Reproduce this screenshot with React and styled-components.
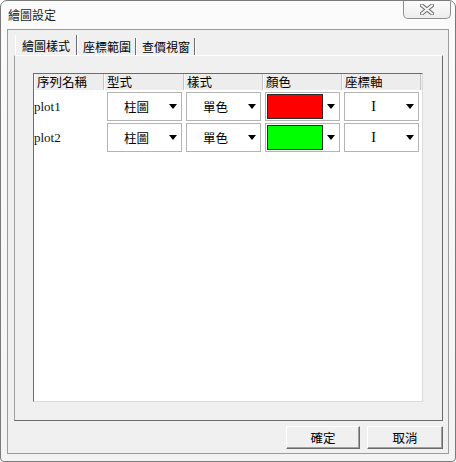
import React from "react";
import styled, { createGlobalStyle } from "styled-components";

const Global = createGlobalStyle`
  html, body { margin: 0; padding: 0; background: #ffffff; }
  * { box-sizing: border-box; }
`;

const CJK = `"Noto Sans CJK TC", "Noto Sans CJK SC", sans-serif`;

const Window = styled.div`
  width: 456px;
  height: 462px;
  border: 1px solid #7a7a7a;
  border-radius: 7px 7px 4px 4px;
  background: linear-gradient(#fbfbfb, #f3f3f3);
  display: flex;
  flex-direction: column;
  font-family: ${CJK};
  font-size: 12px;
  color: #000;
  overflow: hidden;
`;

const TitleBar = styled.div`
  height: 28px;
  display: flex;
  align-items: flex-start;
  justify-content: space-between;
`;

const Title = styled.div`
  padding: 6px 0 0 7px;
  font-size: 12px;
  line-height: 16px;
  color: #1a1a1a;
`;

const CloseButton = styled.div`
  width: 48px;
  height: 19px;
  margin: -1px 4px 0 0;
  border: 1px solid #8f8f8f;
  border-top: none;
  border-radius: 0 0 5px 5px;
  background: linear-gradient(#fdfdfd, #ededed);
  display: flex;
  align-items: center;
  justify-content: center;
`;

const Client = styled.div`
  flex: 1;
  margin: 0 6px 7px 6px;
  border: 1px solid #9b9b9b;
  background: #f0f0f0;
  display: flex;
  flex-direction: column;
  padding: 5px 5px 4px 6px;
`;

const TabStrip = styled.div`
  height: 20px;
  display: flex;
  align-items: flex-end;
  padding-left: 1px;
`;

const Tab = styled.div`
  height: ${(p) => (p.$active ? "20px" : "17px")};
  padding: ${(p) => (p.$active ? "0 6px 0 6px" : "0 4px 0 4px")};
  display: flex;
  align-items: center;
  font-size: 12px;
  line-height: 15px;
  border-left: 1px solid ${(p) => (p.$active ? "#ffffff" : "transparent")};
  border-right: 1px solid #6e6e6e;
  box-shadow: 1px 0 0 #ffffff;
  margin-right: 1px;
  background: #f0f0f0;
`;

const TabPanel = styled.div`
  height: 366px;
  border-top: 1px solid #ffffff;
  border-left: 1px solid #a0a0a0;
  border-right: 1px solid #6a6a6a;
  border-bottom: 1px solid #6a6a6a;
  padding: 17px 18px;
`;

const ListBox = styled.div`
  width: 390px;
  height: 329px;
  background: #ffffff;
  border-top: 1px solid #6d6d6d;
  border-left: 1px solid #6d6d6d;
  border-right: 1px solid #dcdcdc;
  border-bottom: 1px solid #dcdcdc;
`;

const Columns = "70px 80px 79px 79px 79px";

const HeaderRow = styled.div`
  display: grid;
  grid-template-columns: ${Columns};
  height: 16px;
  background: #ededed;
`;

const HeaderCell = styled.div`
  border-right: 1px solid #c6c6c6;
  border-left: 1px solid #fafafa;
  padding-left: 2px;
  font-size: 12.5px;
  line-height: 16px;
  white-space: nowrap;
`;

const Rows = styled.div`
  display: flex;
  flex-direction: column;
  gap: 2px;
  padding-top: 2px;
`;

const Row = styled.div`
  display: flex;
  align-items: center;
  height: 29px;
  gap: 4px;
`;

const NameCell = styled.div`
  width: 70px;
  margin-right: -1px;
  font-family: "Liberation Serif", serif;
  font-size: 13px;
  color: #111;
`;

const Combo = styled.div`
  width: 75px;
  height: 29px;
  border: 1px solid #b4b4b4;
  background: #ffffff;
  display: flex;
  align-items: center;
  padding-left: ${(p) => (p.$swatch ? "1px" : "0")};
`;

const ComboText = styled.div`
  width: 57px;
  text-align: center;
  font-family: ${(p) => (p.$serif ? `"Liberation Serif", serif` : CJK)};
  font-size: ${(p) => (p.$serif ? "14px" : "12.5px")};
  line-height: 16px;
`;

const Swatch = styled.div`
  width: 56px;
  height: 25px;
  border: 1px solid #2a2a2a;
  background: ${(p) => p.$color};
`;

const Arrow = styled.div`
  margin-left: 4px;
  width: 0;
  height: 0;
  border-left: 4px solid transparent;
  border-right: 4px solid transparent;
  border-top: 5px solid #000;
`;

const ButtonRow = styled.div`
  margin-top: 5px;
  height: 23px;
  display: flex;
  justify-content: flex-end;
  gap: 7px;
`;

const Button = styled.div`
  width: ${(p) => p.$w}px;
  height: 23px;
  background: #f0f0f0;
  border-top: 1px solid #ffffff;
  border-left: 1px solid #ffffff;
  border-right: 1px solid #6a6a6a;
  border-bottom: 1px solid #6a6a6a;
  box-shadow: inset -1px -1px 0 #a0a0a0;
  display: flex;
  align-items: center;
  justify-content: center;
  font-size: 12.5px;
`;

const CloseGlyph = () => (
  <svg width="14" height="11" viewBox="0 0 14 11">
    <path d="M2 1.5 L12 9.5 M12 1.5 L2 9.5" stroke="#6a6a6a" strokeWidth="4" strokeLinecap="square" fill="none" />
    <path d="M2 1.5 L12 9.5 M12 1.5 L2 9.5" stroke="#f4f4f4" strokeWidth="2" strokeLinecap="square" fill="none" />
  </svg>
);

const rows = [
  { name: "plot1", type: "柱圖", style: "單色", color: "#ff0000", axis: "I" },
  { name: "plot2", type: "柱圖", style: "單色", color: "#00ff00", axis: "I" },
];

export default function App() {
  return (
    <>
      <Global />
      <Window>
        <TitleBar>
          <Title>繪圖設定</Title>
          <CloseButton>
            <CloseGlyph />
          </CloseButton>
        </TitleBar>
        <Client>
          <TabStrip>
            <Tab $active>繪圖樣式</Tab>
            <Tab>座標範圍</Tab>
            <Tab>查價視窗</Tab>
          </TabStrip>
          <TabPanel>
            <ListBox>
              <HeaderRow>
                <HeaderCell>序列名稱</HeaderCell>
                <HeaderCell>型式</HeaderCell>
                <HeaderCell>樣式</HeaderCell>
                <HeaderCell>顏色</HeaderCell>
                <HeaderCell>座標軸</HeaderCell>
              </HeaderRow>
              <Rows>
                {rows.map((r) => (
                  <Row key={r.name}>
                    <NameCell>{r.name}</NameCell>
                    <Combo>
                      <ComboText>{r.type}</ComboText>
                      <Arrow />
                    </Combo>
                    <Combo>
                      <ComboText>{r.style}</ComboText>
                      <Arrow />
                    </Combo>
                    <Combo $swatch>
                      <Swatch $color={r.color} />
                      <Arrow />
                    </Combo>
                    <Combo>
                      <ComboText $serif>{r.axis}</ComboText>
                      <Arrow />
                    </Combo>
                  </Row>
                ))}
              </Rows>
            </ListBox>
          </TabPanel>
          <ButtonRow>
            <Button $w={74}>確定</Button>
            <Button $w={76}>取消</Button>
          </ButtonRow>
        </Client>
      </Window>
    </>
  );
}
